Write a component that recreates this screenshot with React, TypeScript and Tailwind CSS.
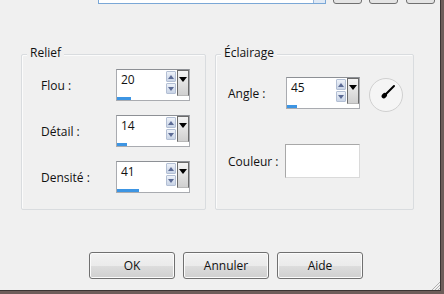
import React from 'react'

const FONT = '"Open Sans", "Noto Sans", "DejaVu Sans", sans-serif'

function Arrow({ up }: { up?: boolean }) {
  return (
    <div className="w-[10px] h-[11px] rounded-[1px] border border-[#b3bfd4] bg-[linear-gradient(#eef2f9,#c9d4e6)] flex items-center justify-center">
      <svg width="6" height="4" viewBox="0 0 6 4">
        <polygon points={up ? '0,4 6,4 3,0' : '0,0 6,0 3,4'} fill="#5c6b95" />
      </svg>
    </div>
  )
}

function SpinBox({ value, bar }: { value: string; bar: number }) {
  return (
    <div className="w-[74px] h-[32px] border border-[#a9abb0] border-t-[#8d9095] bg-white flex flex-col">
      <div className="flex h-[26px]">
        <div className="flex-1 pl-[4px] pt-[2px] leading-[16px] text-[12px] text-[#111]">{value}</div>
        <div className="w-[10px] mr-[1px] pt-[1px] flex flex-col gap-[1px]">
          <Arrow up />
          <Arrow />
        </div>
        <div className="w-[12px] h-[26px] border border-[#6b6b6b] border-b-[#b8b8b8] bg-[linear-gradient(#f4f4f4,#d0d0d0)] flex justify-center pt-[6px]">
          <svg width="8" height="5" viewBox="0 0 8 5">
            <polygon points="0,0 8,0 4,5" fill="#000" />
          </svg>
        </div>
      </div>
      <div className="mt-[1px] h-[3px]">
        <div className="h-[3px] bg-[#3d95e3]" style={{ width: bar }} />
      </div>
    </div>
  )
}

function Group({ title, width, children }: { title: string; width: number; children: React.ReactNode }) {
  return (
    <div
      className="relative h-[156px] border border-[#d9dcdf] rounded-[2px] shadow-[inset_1px_1px_0_#fbfbfb]"
      style={{ width }}
    >
      <span className="absolute -top-[10px] left-[5px] px-[3px] bg-[#f0f0f0] text-[12px] leading-[16px] text-[#111]">
        {title}
      </span>
      {children}
    </div>
  )
}

function Button({ label }: { label: string }) {
  return (
    <button className="w-[86px] h-[27px] rounded-[3px] border border-[#707070] bg-[linear-gradient(#f2f2f2_0%,#ebebeb_50%,#dddddd_51%,#cfcfcf_100%)] shadow-[inset_0_0_0_1px_#fbfbfb] text-[12px] text-[#111]">
      {label}
    </button>
  )
}

export default function App() {
  const relief = [
    { label: 'Flou :', value: '20', bar: 14 },
    { label: 'Détail :', value: '14', bar: 10 },
    { label: 'Densité :', value: '41', bar: 22 },
  ]

  return (
    <div className="w-[444px] h-[294px] bg-[#6e5d5a] overflow-hidden" style={{ fontFamily: FONT }}>
      <div className="relative w-[441px] h-[291px] bg-[#f0f0f0] border-r border-b border-[#3b3433] flex flex-col">
        {/* clipped controls from the row above */}
        <div className="h-[4px] flex items-end overflow-hidden">
          <div className="ml-[98px] w-[228px] h-[20px] border border-[#7aa7d6] bg-white flex justify-end">
            <div className="w-[12px] h-full border-l border-[#9ab8dc] bg-[#dfe9f5]" />
          </div>
          <div className="ml-[7px] w-[29px] h-[20px] rounded-b-[3px] border border-[#707070] bg-[#e4e4e4]" />
          <div className="ml-[7px] w-[29px] h-[20px] rounded-b-[3px] border border-[#707070] bg-[#e4e4e4]" />
          <div className="ml-[8px] w-[29px] h-[20px] rounded-b-[3px] border border-[#707070] bg-[#e4e4e4]" />
        </div>

        <div className="mt-[50px] ml-[21px] flex gap-[9px]">
          <Group title="Relief" width={185}>
            <div className="pt-[14px] pl-[19px] flex flex-col gap-[14px]">
              {relief.map((r) => (
                <div key={r.label} className="flex items-center h-[32px]">
                  <span className="w-[75px] text-[12px] text-[#111] pt-[2px]">{r.label}</span>
                  <SpinBox value={r.value} bar={r.bar} />
                </div>
              ))}
            </div>
          </Group>

          <Group title="Éclairage" width={199}>
            <div className="pt-[22px] pl-[12px] flex flex-col">
              <div className="flex items-center h-[32px]">
                <span className="w-[58px] text-[12px] text-[#111] pt-[2px]">Angle :</span>
                <SpinBox value="45" bar={10} />
                <svg width="36" height="36" viewBox="0 0 36 36" className="ml-[8px] mt-[4px]">
                  <circle cx="18" cy="18" r="16.5" fill="#f5f5f5" stroke="#d0d0d0" strokeWidth="1" />
                  <line x1="16.5" y1="18.5" x2="26" y2="9" stroke="#000" strokeWidth="2" strokeLinecap="round" />
                  <ellipse cx="16.3" cy="18.7" rx="3" ry="2.3" transform="rotate(-45 16.3 18.7)" fill="#000" />
                </svg>
              </div>
              <div className="flex items-center mt-[35px]">
                <span className="w-[57px] text-[12px] text-[#111] pt-[2px]">Couleur :</span>
                <div className="w-[75px] h-[34px] bg-white border border-[#a8a8a8] border-r-[#dadada] border-b-[#dadada]" />
              </div>
            </div>
          </Group>
        </div>

        <div className="mt-[42px] ml-[89px] flex gap-[8px]">
          <Button label="OK" />
          <Button label="Annuler" />
          <Button label="Aide" />
        </div>

        {/* resize grip */}
        <svg width="9" height="9" viewBox="0 0 9 9" className="absolute right-0 bottom-0">
          <line x1="9" y1="1" x2="1" y2="9" stroke="#b0b0b0" />
          <line x1="9" y1="4" x2="4" y2="9" stroke="#b0b0b0" />
          <line x1="9" y1="7" x2="7" y2="9" stroke="#b0b0b0" />
        </svg>
      </div>
    </div>
  )
}
